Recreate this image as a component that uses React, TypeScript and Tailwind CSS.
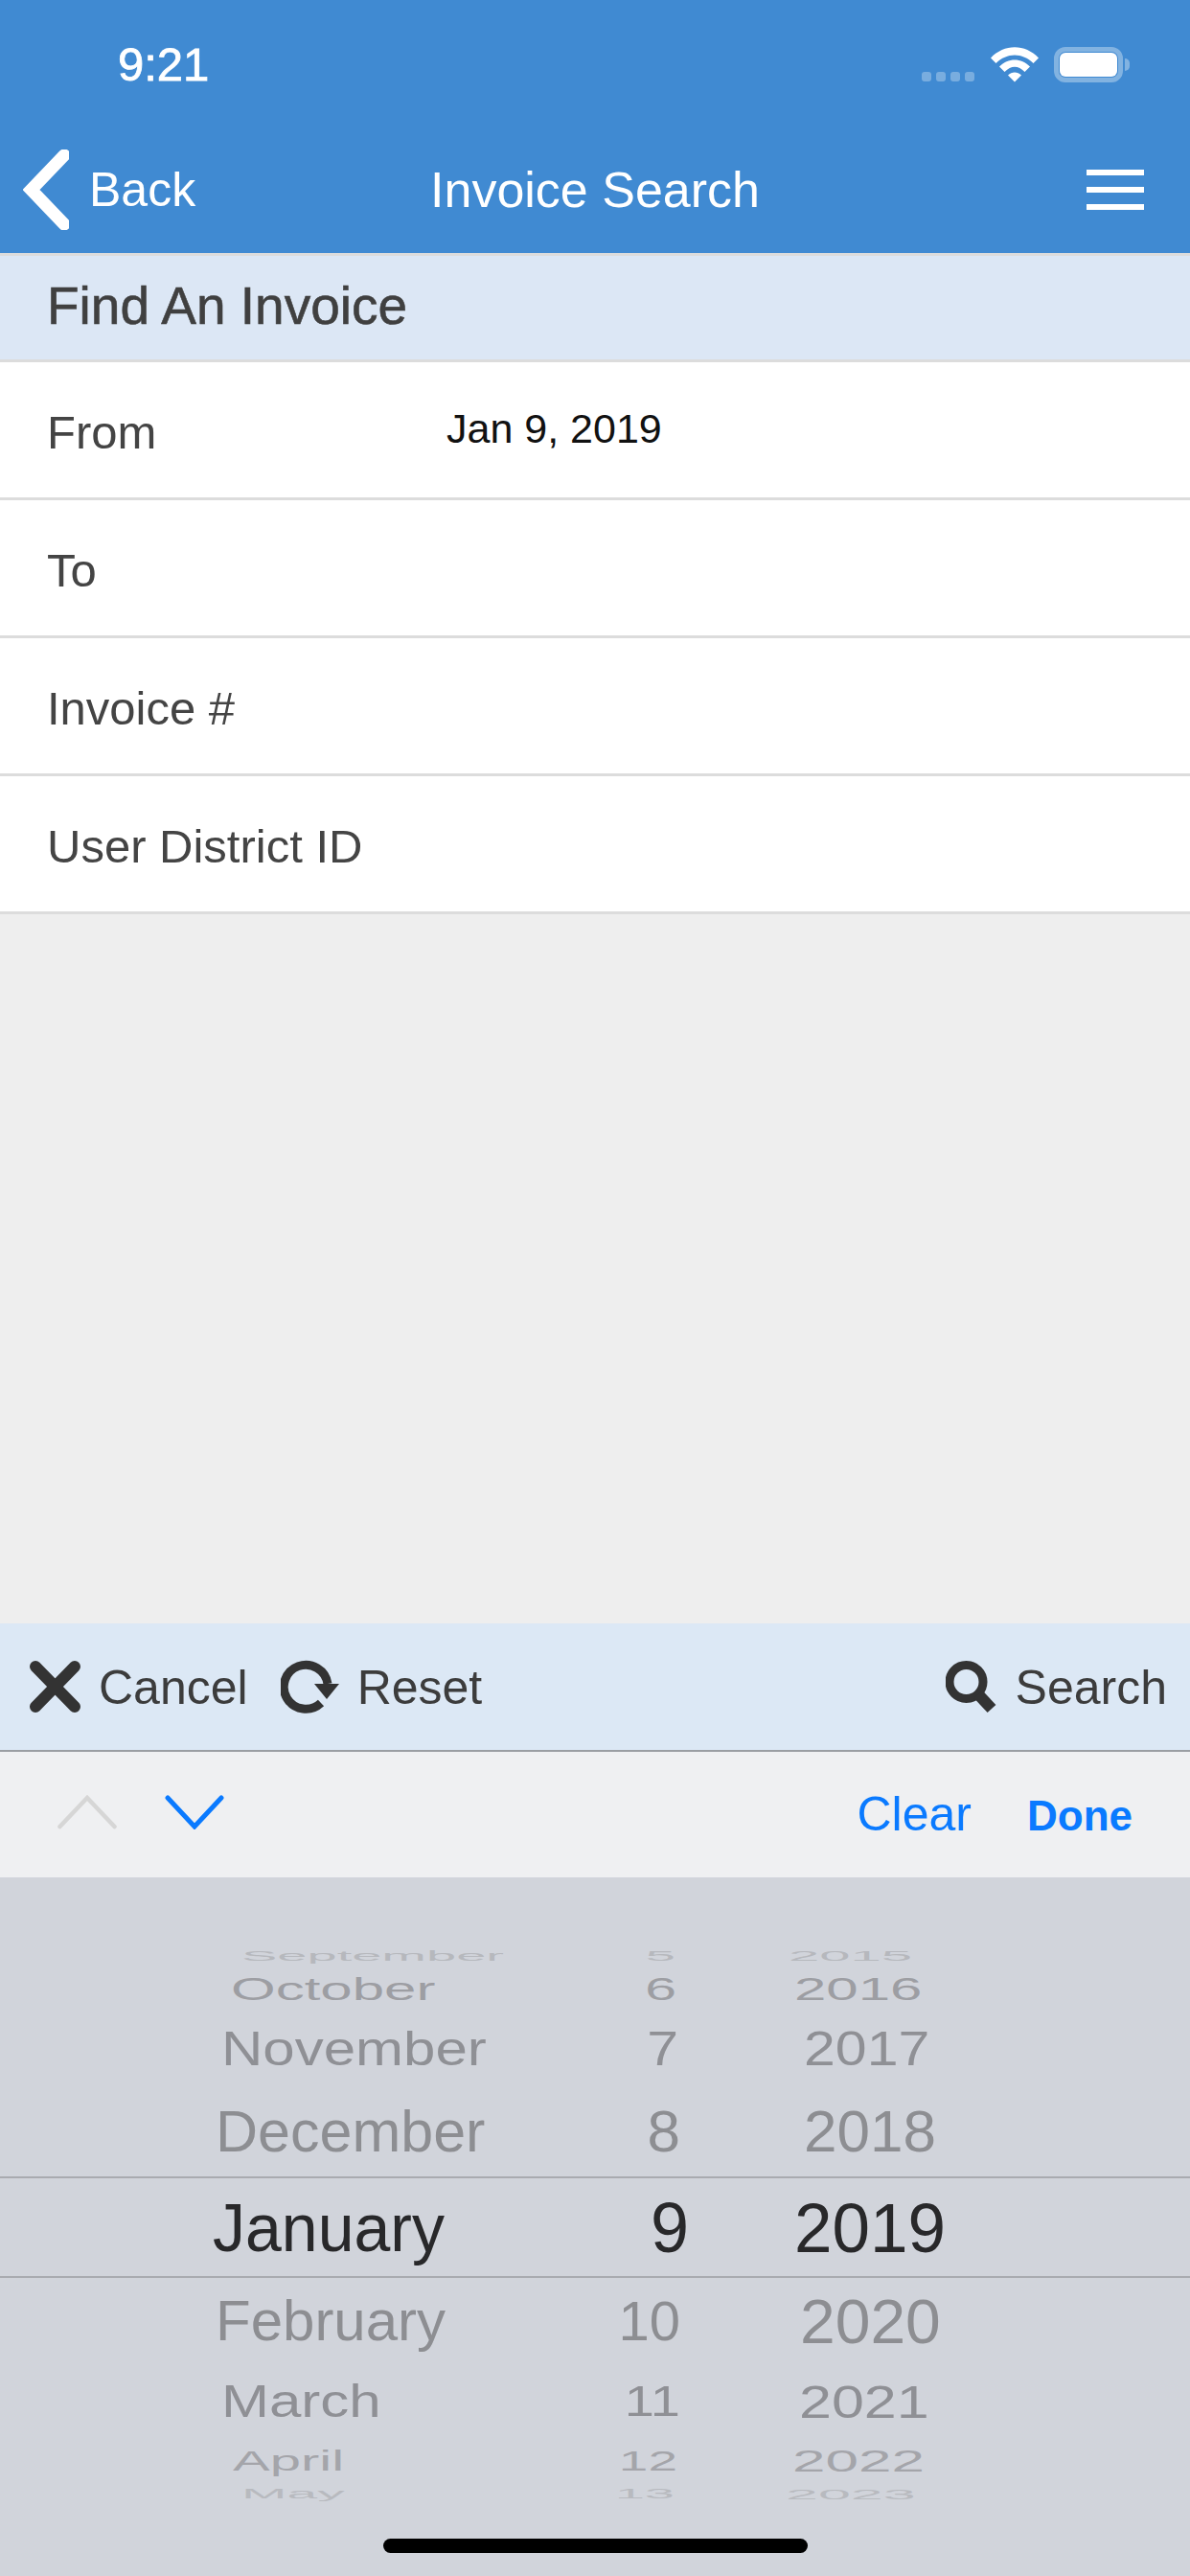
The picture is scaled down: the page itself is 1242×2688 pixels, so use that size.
const rows = [
  {
    h: "h-[24px]",
    color: "text-[#b6b8bd]",
    month: "September",
    day: "5",
    year: "2015",
    scale: "scale-y-[0.26]",
    monthClass: "pl-[252px] text-[56px]",
    dayClass: "pr-[15px] text-[56px]",
    yearClass: "pl-[103px] text-[58px]",
  },
  {
    h: "h-[46px]",
    color: "text-[#9d9ea3]",
    month: "October",
    day: "6",
    year: "2016",
    scale: "scale-y-[0.55]",
    monthClass: "pl-[241px] text-[60px]",
    dayClass: "pr-[14px] text-[59px]",
    yearClass: "pl-[109px] text-[60px]",
  },
  {
    h: "h-[78px]",
    color: "text-[#8f9095]",
    month: "November",
    day: "7",
    year: "2017",
    scale: "scale-y-[0.84]",
    monthClass: "pl-[231px] text-[60px]",
    dayClass: "pr-[12px] text-[59px]",
    yearClass: "pl-[119px] text-[59px]",
  },
  {
    h: "h-[94px]",
    color: "text-[#8d8e92]",
    month: "December",
    day: "8",
    year: "2018",
    scale: "scale-y-[1]",
    monthClass: "pl-[225px] text-[61px]",
    dayClass: "pr-[10px] text-[62px]",
    yearClass: "pl-[119px] text-[62px]",
  },
  {
    h: "h-[106px]",
    color: "text-[#28282a]",
    month: "January",
    day: "9",
    year: "2019",
    scale: "scale-y-[1.03]",
    monthClass: "pl-[222px] text-[68px]",
    dayClass: "pr-[1px] text-[72px]",
    yearClass: "pl-[109px] text-[71px]",
  },
  {
    h: "h-[90px]",
    color: "text-[#8d8e92]",
    month: "February",
    day: "10",
    year: "2020",
    scale: "scale-y-[0.98]",
    monthClass: "pl-[225px] text-[60px]",
    dayClass: "pr-[10px] text-[58px]",
    yearClass: "pl-[115px] text-[66px]",
  },
  {
    h: "h-[78px]",
    color: "text-[#8f9095]",
    month: "March",
    day: "11",
    year: "2021",
    scale: "scale-y-[0.8]",
    monthClass: "pl-[231px] text-[60px]",
    dayClass: "pr-[10px] text-[56px]",
    yearClass: "pl-[114px] text-[61px]",
  },
  {
    h: "h-[46px]",
    color: "text-[#a4a5aa]",
    month: "April",
    day: "12",
    year: "2022",
    scale: "scale-y-[0.52]",
    monthClass: "pl-[243px] text-[58px]",
    dayClass: "pr-[13px] text-[55px]",
    yearClass: "pl-[107px] text-[62px]",
  },
  {
    h: "h-[22px]",
    color: "text-[#b8babf]",
    month: "May",
    day: "13",
    year: "2023",
    scale: "scale-y-[0.25]",
    monthClass: "pl-[252px] text-[57px]",
    dayClass: "pr-[16px] text-[56px]",
    yearClass: "pl-[100px] text-[61px]",
  },
];

function StatusIcons() {
  return (
    <div className="flex items-start">
      <div className="mt-[26px] flex gap-[5px]">
        <div className="h-[10px] w-[10px] rounded-[3px] bg-white/30" />
        <div className="h-[10px] w-[10px] rounded-[3px] bg-white/30" />
        <div className="h-[10px] w-[10px] rounded-[3px] bg-white/30" />
        <div className="h-[10px] w-[10px] rounded-[3px] bg-white/30" />
      </div>
      <svg className="ml-[17px] h-[37px] w-[50px]" viewBox="0 0 50 37">
        <path fill="#fff" d="M0 11.5 C14 -3.5 36 -3.5 50 11.5 L44.5 17 C33 5.5 17 5.5 5.5 17 Z" />
        <path fill="#fff" d="M9 20.5 C18 11 32 11 41 20.5 L35.5 26 C28.5 19 21.5 19 14.5 26 Z" />
        <path fill="#fff" d="M18 29.5 C22 25.5 28 25.5 32 29.5 L25 36.5 Z" />
      </svg>
      <div className="ml-[16px] flex items-center">
        <div className="h-[37px] w-[72px] rounded-[12px] border-[5px] border-white/35 p-[1px]">
          <div className="h-full w-full rounded-[6px] bg-white" />
        </div>
        <div className="ml-[2px] h-[13px] w-[5px] rounded-r-full bg-white/35" />
      </div>
    </div>
  );
}

function Field({ label, value }: { label: string; value?: string }) {
  return (
    <div className="flex h-[144px] items-center border-b-[3px] border-[#dcdcdc] bg-white pl-[49px] text-[#444444]">
      <span className="mt-[6px] w-[417px] text-[49px]">{label}</span>
      {value && <span className="mb-[2px] text-[43px] text-[#111111]">{value}</span>}
    </div>
  );
}

export default function App() {
  return (
    <div className="flex h-[2688px] w-[1242px] flex-col overflow-hidden bg-[#eeeeee] font-['Liberation_Sans',sans-serif]">
      {/* Header */}
      <div className="h-[264px] bg-[#408ad2] text-white">
        <div className="flex h-[132px] justify-between pr-[63px] pt-[49px]">
          <span className="ml-[123px] text-[49px] leading-[37px] [-webkit-text-stroke:0.8px]">9:21</span>
          <StatusIcons />
        </div>
        <div className="grid h-[132px] grid-cols-[1fr_auto_1fr] items-center">
          <div className="flex items-center">
            <svg className="ml-[24px] h-[84px] w-[48px]" viewBox="0 0 48 84">
              <path d="M43 6 L8.5 42 L43 78" fill="none" stroke="#fff" strokeWidth="13" strokeLinecap="round" />
            </svg>
            <span className="ml-[21px] text-[50px]">Back</span>
          </div>
          <span className="text-[52px]">Invoice Search</span>
          <div className="flex justify-end pr-[48px]">
            <div className="flex w-[60px] flex-col gap-[12px]">
              <div className="h-[6px] bg-white" />
              <div className="h-[6px] bg-white" />
              <div className="h-[6px] bg-white" />
            </div>
          </div>
        </div>
      </div>

      {/* Section title */}
      <div className="flex h-[114px] items-center border-y-[3px] border-[#dcdcdc] bg-[#dce7f5] pb-[3px] pl-[49px] text-[55px] text-[#404040] [-webkit-text-stroke:0.6px]">
        Find An Invoice
      </div>

      <Field label="From" value="Jan 9, 2019" />
      <Field label="To" />
      <Field label="Invoice #" />
      <Field label="User District ID" />

      <div className="flex-1 bg-[#eeeeee]" />

      {/* Action bar */}
      <div className="flex h-[132px] items-center justify-between bg-[#dce8f5] pl-[30px] pr-[24px] text-[50px] text-[#3c3c3c]">
        <div className="flex items-center">
          <svg className="h-[56px] w-[56px]" viewBox="0 0 56 56">
            <path d="M7 7 L48 49 M48 7 L7 49" fill="none" stroke="#333333" strokeWidth="12" strokeLinecap="round" />
          </svg>
          <span className="ml-[17px] mt-[2px]">Cancel</span>
          <svg className="ml-[34px] h-[56px] w-[64px]" viewBox="0 0 64 56">
            <path d="M49 25 A23 23 0 1 0 42 45" fill="none" stroke="#333333" strokeWidth="9" />
            <path d="M35 25 L61 25 L48 41 Z" fill="#333333" />
          </svg>
          <span className="ml-[16px] mt-[2px]">Reset</span>
        </div>
        <div className="flex items-center">
          <svg className="h-[56px] w-[54px]" viewBox="0 0 54 56">
            <circle cx="21.5" cy="23" r="17.5" fill="none" stroke="#333333" strokeWidth="9" />
            <path d="M34 36 L48 51" fill="none" stroke="#333333" strokeWidth="12" />
          </svg>
          <span className="ml-[19px] mt-[2px]">Search</span>
        </div>
      </div>

      {/* Keyboard accessory */}
      <div className="flex h-[133px] items-center justify-between border-t-2 border-[#9a9ea3] bg-[#eff0f2] pl-[60px] pr-[60px]">
        <div className="mb-[6px] flex items-center gap-[50px]">
          <svg className="h-[36px] w-[62px]" viewBox="0 0 62 36">
            <path d="M2.5 33 L31 3 L59.5 33" fill="none" stroke="#d6d6d6" strokeWidth="4.5" strokeLinecap="round" />
          </svg>
          <svg className="h-[36px] w-[62px]" viewBox="0 0 62 36">
            <path d="M3 3 L31 33 L59 3" fill="none" stroke="#0a7aff" strokeWidth="5" strokeLinecap="round" />
          </svg>
        </div>
        <div className="flex items-baseline gap-[58px] text-[#0a7aff]">
          <span className="text-[50px]">Clear</span>
          <span className="text-[44px] font-bold">Done</span>
        </div>
      </div>

      {/* Date wheel */}
      <div className="relative h-[729px] bg-[#d1d4db] pt-[70px]">
        {rows.map((row) => (
          <div
            key={row.month}
            className={`flex items-center leading-none ${row.h} ${row.color} ${
              row.month === "January" ? "border-y-2 border-[#a9abb0]" : ""
            }`}
          >
            <span className={`w-[600px] ${row.scale} ${row.monthClass}`}>{row.month}</span>
            <span className={`w-[120px] text-right ${row.scale} ${row.dayClass}`}>{row.day}</span>
            <span className={`${row.scale} ${row.yearClass}`}>{row.year}</span>
          </div>
        ))}
        <div className="absolute bottom-[24px] left-[400px] h-[15px] w-[443px] rounded-full bg-black" />
      </div>
    </div>
  );
}
